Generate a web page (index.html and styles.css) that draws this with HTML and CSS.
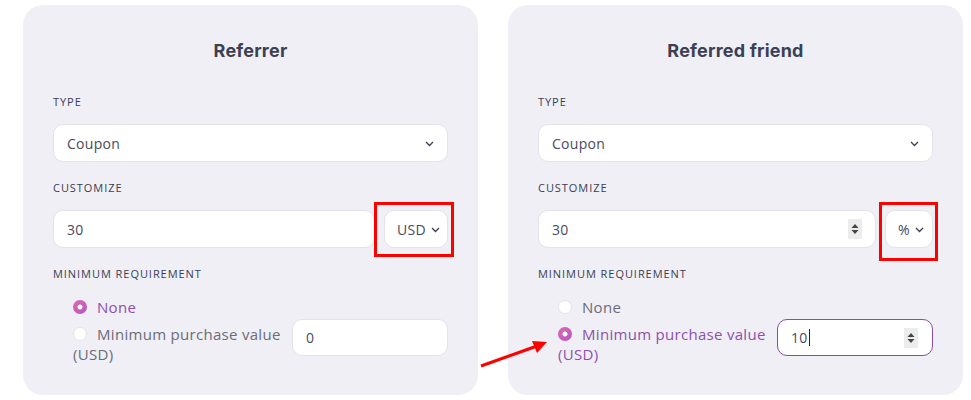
FILE: index.html
```html
<!DOCTYPE html>
<html>
<head>
<meta charset="utf-8">
<link rel="stylesheet" href="styles.css">
</head>
<body>
<div class="page">
  <section class="card">
    <h2 class="title">Referrer</h2>
    <div class="label label-first">TYPE</div>
    <div class="select">
      <span>Coupon</span>
      <svg class="chev" width="9" height="6" viewBox="0 0 9 6"><path d="M1 1l3.5 3.5L8 1" fill="none" stroke="#3b3d52" stroke-width="1.3"/></svg>
    </div>
    <div class="label">CUSTOMIZE</div>
    <div class="row">
      <div class="input grow"><span>30</span></div>
      <div class="select unit unit-usd">
        <span>USD</span>
        <svg class="chev" width="9" height="6" viewBox="0 0 9 6"><path d="M1 1l3.5 3.5L8 1" fill="none" stroke="#3b3d52" stroke-width="1.3"/></svg>
      </div>
      <div class="mark mark-usd"></div>
    </div>
    <div class="label">MINIMUM REQUIREMENT</div>
    <div class="radios">
      <div class="opt opt-on"><span class="radio on"></span>None</div>
      <div class="opt-row">
        <div class="opt opt-wrap"><span class="radio"></span>Minimum purchase value (USD)</div>
        <div class="input minval"><span>0</span></div>
      </div>
    </div>
  </section>

  <section class="card">
    <h2 class="title">Referred friend</h2>
    <div class="label label-first">TYPE</div>
    <div class="select">
      <span>Coupon</span>
      <svg class="chev" width="9" height="6" viewBox="0 0 9 6"><path d="M1 1l3.5 3.5L8 1" fill="none" stroke="#3b3d52" stroke-width="1.3"/></svg>
    </div>
    <div class="label">CUSTOMIZE</div>
    <div class="row">
      <div class="input grow">
        <span>30</span>
        <span class="spin"><svg width="8" height="14" viewBox="0 0 8 14"><path d="M4 2L7.5 6H0.5z M4 12L7.5 8H0.5z" fill="#444"/></svg></span>
      </div>
      <div class="select unit unit-pct">
        <span>%</span>
        <svg class="chev" width="9" height="6" viewBox="0 0 9 6"><path d="M1 1l3.5 3.5L8 1" fill="none" stroke="#3b3d52" stroke-width="1.3"/></svg>
      </div>
      <div class="mark mark-pct"></div>
    </div>
    <div class="label">MINIMUM REQUIREMENT</div>
    <div class="radios">
      <div class="opt"><span class="radio"></span>None</div>
      <div class="opt-row">
        <div class="opt opt-wrap opt-on"><span class="radio on"></span>Minimum purchase value (USD)</div>
        <div class="input minval active">
          <span>10<i class="caret"></i></span>
          <span class="spin"><svg width="8" height="14" viewBox="0 0 8 14"><path d="M4 2L7.5 6H0.5z M4 12L7.5 8H0.5z" fill="#444"/></svg></span>
        </div>
      </div>
    </div>
  </section>

  <svg class="arrow" width="80" height="40" viewBox="0 0 80 40">
    <line x1="2" y1="33" x2="58" y2="13" stroke="#f00" stroke-width="3"/>
    <path d="M68 9 L53 8 L58 20 Z" fill="#f00"/>
  </svg>
</div>
</body>
</html>
```

FILE: styles.css
```css
* { box-sizing: border-box; }
html, body { margin: 0; padding: 0; background: #fff; }
body {
  font-family: "Open Sans", "Noto Sans", sans-serif;
  color: #3b3d52;
}
.page {
  position: relative;
  display: flex;
  gap: 30px;
  padding: 5px 0 0 23px;
  width: 971px;
  height: 400px;
  overflow: hidden;
}
.card {
  width: 455px;
  height: 390px;
  background: #efeff5;
  border-radius: 20px;
  padding: 34px 30px 0 30px;
  display: flex;
  flex-direction: column;
  flex-shrink: 0;
}
.title {
  margin: 0;
  font-family: "Inter", "Open Sans", sans-serif;
  font-size: 18px;
  font-weight: 700;
  line-height: 24px;
  text-align: center;
  color: #3d3f54;
  letter-spacing: 0.2px;
}
.label {
  font-size: 11px;
  font-weight: 500;
  letter-spacing: 0.95px;
  line-height: 16px;
  color: #3b3d52;
  margin-top: 18px;
  margin-bottom: 14px;
}
.label-first { margin-top: 31px; }
.select, .input {
  height: 38px;
  background: #fff;
  border: 1px solid #e2e3eb;
  border-radius: 10px;
  display: flex;
  align-items: center;
  justify-content: space-between;
  padding: 0 13px 0 13px;
  font-size: 14px;
  color: #4a4b5c;
  letter-spacing: 0.3px;
}
.chev { display: block; margin-top: 1px; flex-shrink: 0; }
.row {
  position: relative;
  display: flex;
  gap: 9px;
}
.grow { flex: 1; }
.unit { padding: 0 6px 0 12px; gap: 5px; justify-content: flex-start; }
.unit-usd { width: 64px; }
.unit-pct { width: 48px; padding-left: 12px; }
.spin {
  display: flex;
  align-items: center;
  justify-content: center;
  width: 14px;
  height: 20px;
  background: #ececec;
}
.mark {
  position: absolute;
  border: 3px solid #ff0000;
  pointer-events: none;
}
.mark-usd { left: 321px; top: -8px; width: 80px; height: 55px; }
.mark-pct { left: 341px; top: -8px; width: 59px; height: 59px; }
.radios {
  padding-left: 20px;
  margin-top: 1px;
  display: flex;
  flex-direction: column;
  gap: 2px;
}
.opt {
  font-size: 15px;
  line-height: 20px;
  color: #6b6c7a;
  letter-spacing: 0.3px;
}
.opt-on { color: #8e4fae; }
.radio {
  display: inline-block;
  width: 14px;
  height: 14px;
  border-radius: 50%;
  background: #fff;
  border: 1px solid #e4e4ec;
  vertical-align: -1px;
  margin-right: 10px;
}
.radio.on {
  border: none;
  background: radial-gradient(circle, #fff 0 2.2px, transparent 2.8px), linear-gradient(135deg, #e069b4, #b457c2);
}
.opt-row {
  display: flex;
  align-items: flex-start;
  gap: 4px;
}
.opt-wrap { flex: 1; margin-top: 5px; }
.minval {
  width: 156px;
  height: 37px;
  flex-shrink: 0;
  padding-right: 14px;
}
.minval.active { border-color: #8a4ca8; }
.caret {
  display: inline-block;
  width: 1px;
  height: 17px;
  background: #222;
  vertical-align: -3px;
  margin-left: 1px;
}
.arrow {
  position: absolute;
  left: 479px;
  top: 333px;
}
```
